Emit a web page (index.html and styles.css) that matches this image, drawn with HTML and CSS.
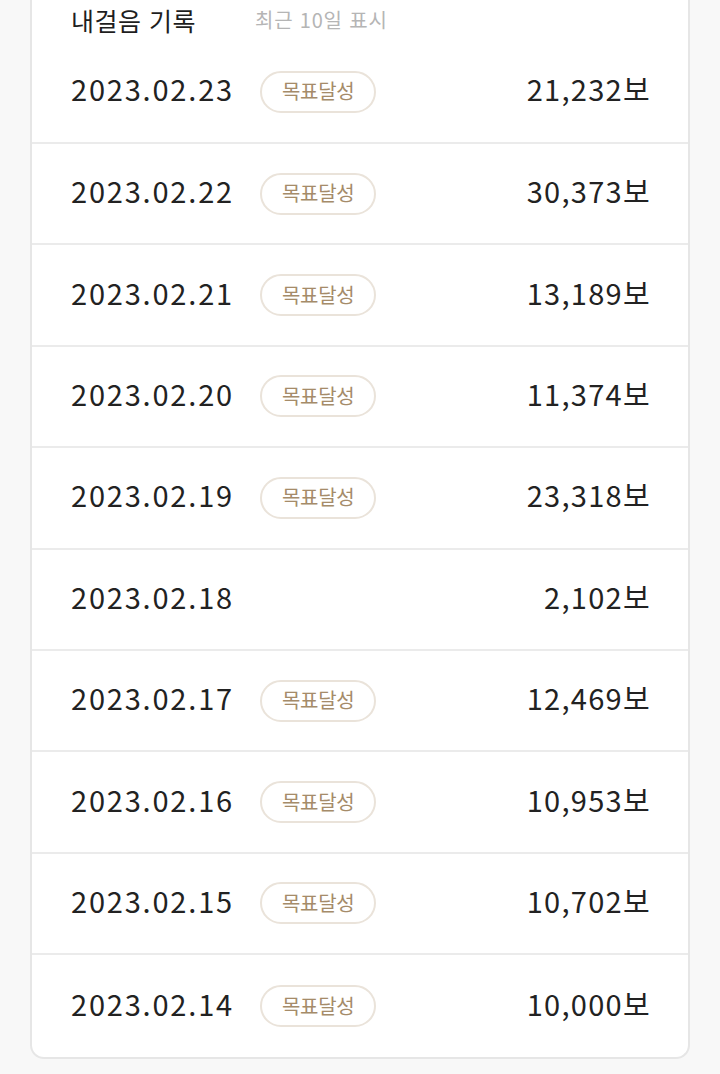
FILE: index.html
```html
<!DOCTYPE html>
<html lang="ko">
<head>
<meta charset="utf-8">
<link rel="stylesheet" href="styles.css">
</head>
<body>
<div class="card">
  <div class="header">
    <span class="title">내걸음 기록</span>
    <span class="sub">최근 10일 표시</span>
  </div>
  <div class="row"><span class="date">2023.02.23</span><span class="badge">목표달성</span><span class="steps">21,232보</span></div>
  <div class="row"><span class="date">2023.02.22</span><span class="badge">목표달성</span><span class="steps">30,373보</span></div>
  <div class="row"><span class="date">2023.02.21</span><span class="badge">목표달성</span><span class="steps">13,189보</span></div>
  <div class="row"><span class="date">2023.02.20</span><span class="badge">목표달성</span><span class="steps">11,374보</span></div>
  <div class="row"><span class="date">2023.02.19</span><span class="badge">목표달성</span><span class="steps">23,318보</span></div>
  <div class="row"><span class="date">2023.02.18</span><span class="steps">2,102보</span></div>
  <div class="row"><span class="date">2023.02.17</span><span class="badge">목표달성</span><span class="steps">12,469보</span></div>
  <div class="row"><span class="date">2023.02.16</span><span class="badge">목표달성</span><span class="steps">10,953보</span></div>
  <div class="row"><span class="date">2023.02.15</span><span class="badge">목표달성</span><span class="steps">10,702보</span></div>
  <div class="row last"><span class="date">2023.02.14</span><span class="badge">목표달성</span><span class="steps">10,000보</span></div>
</div>
</body>
</html>
```

FILE: styles.css
```css
html, body {
  margin: 0;
  padding: 0;
  background: #f8f8f8;
}
body {
  font-family: "Noto Sans CJK KR", "Noto Sans", sans-serif;
  color: #222222;
}
.card {
  margin: 0 30px;
  background: #ffffff;
  border: 2px solid #e6e6e6;
  border-top: none;
  border-radius: 0 0 14px 14px;
  overflow: hidden;
}
.header {
  height: 41px;
  display: flex;
  align-items: center;
  padding: 0 38px 0 39px;
  box-sizing: border-box;
}
.title {
  font-size: 25px;
  color: #1e1e1e;
  width: 184px;
  letter-spacing: 0.5px;
  margin-bottom: 2px;
}
.sub {
  font-size: 20px;
  color: #b5b5b5;
  letter-spacing: 0.8px;
  margin-bottom: 2px;
}
.row {
  height: 101.4px;
  box-sizing: border-box;
  display: flex;
  align-items: center;
  padding: 0 38px 0 39px;
  border-top: 2px solid #ebebeb;
}
.header + .row {
  border-top: none;
  height: 101px;
}
.row.last {
  height: 104px;
}
.date {
  font-size: 29px;
  letter-spacing: 1.8px;
  color: #222222;
  margin-bottom: 7px;
  font-variant-numeric: proportional-nums;
}
.badge {
  margin-left: 26px;
  height: 42px;
  box-sizing: border-box;
  padding: 0 20px 2px;
  border: 2px solid #eae3da;
  border-radius: 21px;
  display: flex;
  align-items: center;
  font-size: 20px;
  color: #a58b69;
  letter-spacing: -0.3px;
}
.steps {
  margin-left: auto;
  font-size: 29px;
  letter-spacing: 1.3px;
  margin-right: -1px;
  color: #222222;
  margin-bottom: 7px;
  font-variant-numeric: proportional-nums;
}
```
